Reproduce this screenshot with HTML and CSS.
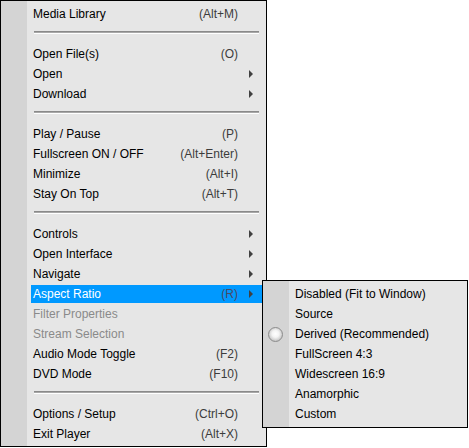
FILE: index.html
```html
<!DOCTYPE html>
<html lang="en">
<head>
    <meta charset="UTF-8">
    <title>Player Menu</title>
    <link rel="stylesheet" href="styles.css">
</head>
<body>
    <div class="stage">
        <!-- Main context menu -->
        <div class="menu main-menu">
            <div class="item"><span class="label">Media Library</span><span class="key">(Alt+M)</span><span class="arrow-cell"></span></div>
            <div class="sep"></div>
            <div class="item"><span class="label">Open File(s)</span><span class="key">(O)</span><span class="arrow-cell"></span></div>
            <div class="item"><span class="label">Open</span><span class="key"></span><span class="arrow-cell"><i class="arrow"></i></span></div>
            <div class="item"><span class="label">Download</span><span class="key"></span><span class="arrow-cell"><i class="arrow"></i></span></div>
            <div class="sep"></div>
            <div class="item"><span class="label">Play / Pause</span><span class="key">(P)</span><span class="arrow-cell"></span></div>
            <div class="item"><span class="label">Fullscreen ON / OFF</span><span class="key">(Alt+Enter)</span><span class="arrow-cell"></span></div>
            <div class="item"><span class="label">Minimize</span><span class="key">(Alt+I)</span><span class="arrow-cell"></span></div>
            <div class="item"><span class="label">Stay On Top</span><span class="key">(Alt+T)</span><span class="arrow-cell"></span></div>
            <div class="sep"></div>
            <div class="item"><span class="label">Controls</span><span class="key"></span><span class="arrow-cell"><i class="arrow"></i></span></div>
            <div class="item"><span class="label">Open Interface</span><span class="key"></span><span class="arrow-cell"><i class="arrow"></i></span></div>
            <div class="item"><span class="label">Navigate</span><span class="key"></span><span class="arrow-cell"><i class="arrow"></i></span></div>
            <div class="item active"><span class="label">Aspect Ratio</span><span class="key">(R)</span><span class="arrow-cell"><i class="arrow"></i></span></div>
            <div class="item disabled"><span class="label">Filter Properties</span><span class="key"></span><span class="arrow-cell"></span></div>
            <div class="item disabled"><span class="label">Stream Selection</span><span class="key"></span><span class="arrow-cell"></span></div>
            <div class="item"><span class="label">Audio Mode Toggle</span><span class="key">(F2)</span><span class="arrow-cell"></span></div>
            <div class="item"><span class="label">DVD Mode</span><span class="key">(F10)</span><span class="arrow-cell"></span></div>
            <div class="sep"></div>
            <div class="item"><span class="label">Options / Setup</span><span class="key">(Ctrl+O)</span><span class="arrow-cell"></span></div>
            <div class="item"><span class="label">Exit Player</span><span class="key">(Alt+X)</span><span class="arrow-cell"></span></div>
        </div>

        <!-- Aspect Ratio submenu -->
        <div class="menu sub-menu">
            <div class="item"><span class="check"></span><span class="label">Disabled (Fit to Window)</span></div>
            <div class="item"><span class="check"></span><span class="label">Source</span></div>
            <div class="item"><span class="check"><i class="radio"></i></span><span class="label">Derived (Recommended)</span></div>
            <div class="item"><span class="check"></span><span class="label">FullScreen 4:3</span></div>
            <div class="item"><span class="check"></span><span class="label">Widescreen 16:9</span></div>
            <div class="item"><span class="check"></span><span class="label">Anamorphic</span></div>
            <div class="item"><span class="check"></span><span class="label">Custom</span></div>
        </div>
    </div>
</body>
</html>
```

FILE: styles.css
```css
/* Global */
body {
    margin: 0;
    background: #ffffff;
    font-family: 'Liberation Sans', Arial, sans-serif;
    font-size: 12px;
    color: #000000;
}

.stage {
    position: relative;
    width: 469px;
    height: 448px;
}

/* Menu boxes */
.menu {
    display: flex;
    flex-direction: column;
    border: 1px solid #000000;
    padding: 3px 0;
    background: linear-gradient(to right, #d4d4d4 26px, #e6e6e6 26px);
    box-sizing: border-box;
}

.main-menu {
    width: 267px;
    height: 447px;
}

.sub-menu {
    position: absolute;
    left: 262px;
    top: 280px;
    width: 206px;
}

/* Rows */
.item {
    display: flex;
    align-items: center;
    flex: none;
    height: 18px;
    line-height: 18px;
    margin: 1px 4px 1px 30px;
    padding-left: 2px;
    white-space: nowrap;
}

.item .label {
    flex: 1;
}

.item .key {
    color: #3c3c3c;
}

.arrow-cell {
    width: 24px;
    height: 18px;
    display: flex;
    align-items: center;
}

.arrow {
    display: block;
    margin-left: 11px;
    width: 0;
    height: 0;
    border-left: 4px solid #404040;
    border-top: 4px solid transparent;
    border-bottom: 4px solid transparent;
}

.item.active {
    background: #0099ff;
    color: #ffffff;
}

.item.active .key {
    color: #4a4a66;
}

.item.disabled {
    color: #8a8a8a;
}

/* Separator */
.sep {
    flex: none;
    height: 20px;
}

.sep::after {
    content: "";
    display: block;
    margin: 7px 7px 0 33px;
    height: 1px;
    background: #a8a8a8;
    border-top: 1px solid #8a8a8a;
    border-bottom: 1px solid #ffffff;
}

/* Submenu rows */
.sub-menu .item {
    margin-left: 0;
    padding-left: 0;
}

.sub-menu .check {
    width: 32px;
    height: 18px;
    display: flex;
    align-items: center;
}

.radio {
    display: block;
    margin-left: 5px;
    width: 13px;
    height: 13px;
    border-radius: 50%;
    border: 1px solid #8c8c8c;
    background: radial-gradient(circle at 50% 45%, #ffffff 0, #f4f4f4 35%, #c4c4c4 75%, #9a9a9a 100%);
}
```
